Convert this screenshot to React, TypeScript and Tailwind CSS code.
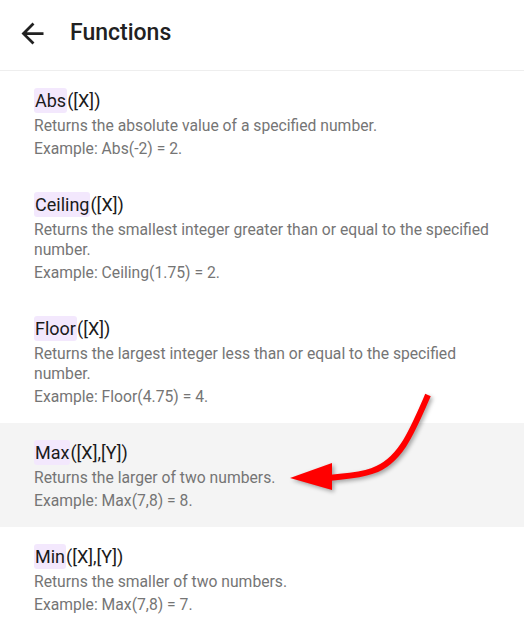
import { MdArrowBack } from "react-icons/md";

const functions = [
  {
    name: "Abs",
    args: "([X])",
    desc: "Returns the absolute value of a specified number.",
    example: "Example: Abs(-2) = 2.",
  },
  {
    name: "Ceiling",
    args: "([X])",
    desc: "Returns the smallest integer greater than or equal to the specified number.",
    example: "Example: Ceiling(1.75) = 2.",
  },
  {
    name: "Floor",
    args: "([X])",
    desc: "Returns the largest integer less than or equal to the specified number.",
    example: "Example: Floor(4.75) = 4.",
  },
  {
    name: "Max",
    args: "([X],[Y])",
    desc: "Returns the larger of two numbers.",
    example: "Example: Max(7,8) = 8.",
    active: true,
  },
  {
    name: "Min",
    args: "([X],[Y])",
    desc: "Returns the smaller of two numbers.",
    example: "Example: Max(7,8) = 7.",
  },
];

export default function App() {
  return (
    <div className="relative w-[524px] h-[635px] overflow-hidden bg-white font-['Roboto',sans-serif]">
      {/* Header */}
      <div className="h-[71px] flex items-center border-b border-[#eeeeee]">
        <button className="ml-[16px] -mt-[4px] w-[33px] h-[33px] flex items-center justify-center text-[#212121]">
          <MdArrowBack size={33} />
        </button>
        <h1 className="ml-[21px] text-[23px] font-medium text-[#212121] -mt-[4px]">Functions</h1>
      </div>

      {/* List */}
      <ul>
        {functions.map((fn) => (
          <li
            key={fn.name}
            className={`pl-[34px] pr-[24px] pt-[17px] pb-[16px] ${fn.active ? "bg-[#f4f4f4]" : ""}`}
          >
            <div className="text-[18px] leading-[25px] text-[#1a1a1a]">
              <span className="bg-[#f3e8fd] rounded-[3px] px-[1px] inline-block">{fn.name}</span>
              {fn.args}
            </div>
            <p className="mt-[3px] text-[15.7px] leading-[20px] text-[#757575]">{fn.desc}</p>
            <p className="mt-[3px] text-[15.7px] leading-[20px] text-[#757575]">{fn.example}</p>
          </li>
        ))}
      </ul>

      {/* Annotation arrow */}
      <svg
        className="absolute left-0 top-0 pointer-events-none"
        width="524"
        height="635"
        style={{ filter: "drop-shadow(2px 2px 2px rgba(0,0,0,0.35))" }}
      >
        <path
          d="M428 395 C 412 432, 400 462, 372 471 C 358 476, 345 476, 328 478"
          fill="none"
          stroke="#ff0000"
          strokeWidth="6"
        />
        <polygon points="290,478 332,463 332,490" fill="#ff0000" />
      </svg>
    </div>
  );
}
